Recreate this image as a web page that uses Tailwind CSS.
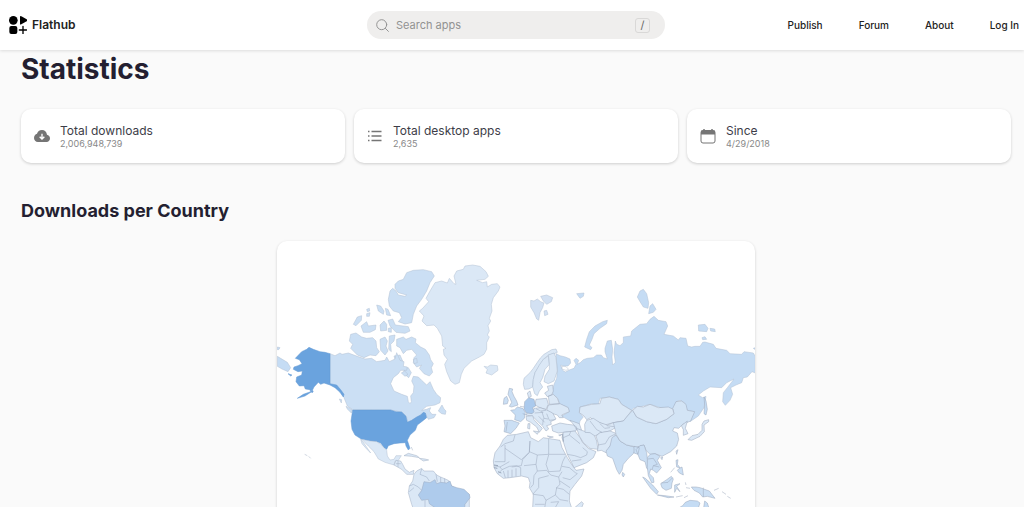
<!DOCTYPE html>
<html lang="en">
<head>
    <meta charset="UTF-8">
    <meta name="viewport" content="width=device-width, initial-scale=1.0">
    <title>Statistics | Flathub</title>
    <script src="https://cdn.jsdelivr.net/npm/@tailwindcss/browser@4"></script>
</head>
<body class="bg-[#fafafa] font-['Inter',sans-serif] text-[#241f31]">
    <div class="flex h-screen flex-col overflow-hidden">
        <!-- Header -->
        <header class="z-10 grid flex-shrink-0 grid-cols-[minmax(0,1fr)_298px_359px] items-center bg-white py-[11px] pl-[9px] shadow-[0_1px_3px_rgba(0,0,0,0.12)]">
            <a href="#" class="flex items-center gap-[5px] text-xs font-semibold text-[#222]">
                <svg class="h-[18px] w-[18px]" viewBox="0 0 54 54" fill="#000">
                    <circle cx="13" cy="13" r="13"/>
                    <rect x="1" y="30" width="24" height="24" rx="6"/>
                    <path d="M33 3q0-4 4-2l16 9q3 3 0 6l-16 9q-4 2-4-2z"/>
                    <path d="M42 31v22M31 42h22" stroke="#000" stroke-width="4" stroke-linecap="round"/>
                </svg>
                Flathub
            </a>
            <form class="flex h-7 items-center gap-[7px] rounded-full bg-[#efeeed] pr-[15px] pl-[9px]">
                <svg class="h-[13px] w-[13px] flex-shrink-0" viewBox="0 0 13 13" fill="none" stroke="#949494" stroke-linecap="round">
                    <circle cx="5.7" cy="5.7" r="5"/>
                    <path d="M9.4 9.4l3 3"/>
                </svg>
                <input type="text" aria-label="Search apps" placeholder="Search apps" class="min-w-0 flex-1 bg-transparent text-[11px] outline-none placeholder:text-[#929292]">
                <kbd class="flex h-[15px] w-[15px] items-center justify-center rounded-[3px] border border-[#d9d8d7] font-['Inter',sans-serif] text-[11px] text-[#666]">/</kbd>
            </form>
            <nav class="flex justify-end gap-9 pr-[5px] text-[10px] font-medium whitespace-nowrap text-[#222]">
                <a href="#">Publish</a>
                <a href="#">Forum</a>
                <a href="#">About</a>
                <a href="#">Log In</a>
            </nav>
        </header>

        <main class="flex flex-col pr-[13px] pl-[21px]">
            <h1 class="pt-[3px] text-[28px] leading-8 font-bold">Statistics</h1>

            <!-- Totals -->
            <div class="mt-6 grid grid-cols-3 gap-[9px] text-[#3d3d48]">
                <div class="flex items-center gap-[10px] rounded-[10px] bg-white px-[13px] py-[14px] shadow-[0_1px_3px_rgba(0,0,0,0.18)]">
                    <svg class="h-4 w-4" viewBox="0 0 48 40" fill="#757575">
                        <path d="M39 16C38 7 32 2 24 2S11 7 9 13C4 14 0 19 0 26c0 7 5 12 12 12h26c6 0 10-5 10-11s-4-10-9-11z"/>
                        <path d="M24 13v15M17 22l7 7 7-7" fill="none" stroke="#fff" stroke-width="4"/>
                    </svg>
                    <div>
                        <div class="text-xs leading-4">Total downloads</div>
                        <div class="text-[9px] leading-[10px] text-[#888]">2,006,948,739</div>
                    </div>
                </div>
                <div class="flex items-center gap-[10px] rounded-[10px] bg-white px-[13px] py-[14px] shadow-[0_1px_3px_rgba(0,0,0,0.18)]">
                    <svg class="h-4 w-4" viewBox="0 0 16 16" fill="none" stroke="#757575" stroke-width="1.400">
                        <path d="M4.500 3.500h10M4.500 8h10M4.500 12.500h10M1 3.500h1.500M1 8h1.500M1 12.500h1.500"/>
                    </svg>
                    <div>
                        <div class="text-xs leading-4">Total desktop apps</div>
                        <div class="text-[9px] leading-[10px] text-[#888]">2,635</div>
                    </div>
                </div>
                <div class="flex items-center gap-[10px] rounded-[10px] bg-white px-[13px] py-[14px] shadow-[0_1px_3px_rgba(0,0,0,0.18)]">
                    <svg class="h-4 w-4" viewBox="0 0 16 16" fill="none" stroke="#757575">
                        <rect x="1" y="2.500" width="14" height="12.500" rx="2"/>
                        <path d="M1 4.500h14" stroke-width="4"/>
                        <path d="M4 1v3M12 1v3" stroke-width="1.500"/>
                    </svg>
                    <div>
                        <div class="text-xs leading-4">Since</div>
                        <div class="text-[9px] leading-[10px] text-[#888]">4/29/2018</div>
                    </div>
                </div>
            </div>

            <h2 class="mt-9 text-lg leading-6 font-bold">Downloads per Country</h2>

            <!-- World map -->
            <div class="mt-[18px] w-[478px] max-w-full self-center overflow-hidden rounded-[10px] bg-white shadow-[0_1px_3px_rgba(0,0,0,0.18)]">
                <svg class="block w-full" viewBox="0 0 1434 840" role="img" aria-label="Downloads per country" fill="#dbe8f6" stroke="#b3c0d2" stroke-width="1.500" stroke-linejoin="round">
                    <!-- Canadian Arctic -->
                    <g transform="translate(-21 -30)" fill="#cbdff4">
                        <path d="M375 160L385 150 400 145 410 125 430 118 460 116 485 122 493 135 480 155 470 180 455 205 440 225 430 250 425 275 405 279 385 272 395 260 388 245 370 240 358 225 355 205 360 180 368 172 378 180 385 192 405 196 410 192 385 185 375 172Z"/>
                        <path d="M320 222L332 225 342 240 340 250 325 240ZM346 232L354 235 362 254 350 252ZM290 235L298 232 299 240 292 242ZM290 248L300 245 298 256 290 256ZM250 280L262 258 275 254 274 268 258 284ZM273 285L290 272 295 285 318 282 316 296 300 304 280 304ZM330 282L342 270 350 280 350 298 332 300ZM354 268L368 264 376 282 415 287 420 300 405 307 378 304 360 285ZM355 292L364 290 364 304 355 302Z"/>
                        <path d="M242 310L258 306 275 318 290 322 308 320 318 330 320 350 328 362 318 374 300 372 282 380 262 372 242 352 248 340 238 330ZM330 325L345 318 352 330 348 345 354 360 345 372 332 358ZM358 315L375 312 372 330 362 340 364 362 356 355Z"/>
                        <path d="M380 325L400 318 408 325 425 318 438 324 436 335 452 348 466 355 478 372 482 386 490 398 484 410 488 424 478 435 462 428 448 412 455 402 440 408 430 395 432 380 440 372 425 355 410 358 400 368 390 350 380 345ZM372 375L390 372 398 390 388 398 376 388ZM430 385L440 382 442 395 432 398ZM402 412L415 410 424 425 416 440 402 428Z"/>
                    </g>
                    <!-- Greenland, Iceland, Svalbard -->
                    <g transform="translate(369 -30)">
                        <path d="M58 240L68 232 86 212 78 202 90 180 105 155 125 150 142 156 148 142 162 158 168 160 162 135 170 120 190 115 195 105 218 102 240 106 258 122 265 136 255 145 230 148 248 155 260 152 262 168 275 160 292 158 300 168 295 180 280 200 274 220 276 240 268 262 272 270 264 284 268 300 262 312 268 318 260 335 260 355 252 370 238 378 215 390 192 412 184 430 178 455 165 460 152 450 140 422 134 400 142 385 132 372 130 355 138 352 128 345 125 315 112 292 102 282 80 284 66 270 72 255Z"/>
                        <path d="M252 406L262 408 272 402 292 404 294 418 275 432 258 426 262 416Z"/>
                        <path fill="#d3e1f3" d="M392 208L402 210 412 204 422 212 432 216 428 230 420 245 416 268 410 264 402 245 392 228ZM422 196L440 192 458 200 454 212 440 220 430 210ZM432 240L440 238 444 250 434 254Z"/>
                    </g>
                    <!-- Russia -->
                    <g transform="translate(789 90)" fill="#c5dcf4">
                        <path d="M48 248L60 254 76 258 90 264 92 276 84 285 70 285 62 282 68 298 76 303 90 296 102 292 108 280 102 268 108 262 116 268 112 280 122 274 130 266 142 262 160 260 170 252 184 252 190 260 202 264 195 242 195 232 202 210 214 208 218 235 216 258 218 282 226 274 222 245 226 210 230 220 240 224 250 215 250 198 272 195 275 180 300 160 320 158 330 145 342 136 355 148 378 152 383 165 372 190 400 195 415 207 420 200 438 202 443 225 455 228 465 226 480 226 488 214 495 213 520 220 528 232 560 238 570 248 605 250 612 242 640 246 646 256V306L636 302 622 318 610 320 605 335 588 342 572 350 578 370 570 388 556 403 548 392 550 365 562 350 582 324 560 335 545 350 510 348 490 360 475 372 488 380 498 376 492 410 475 435 450 452 462 422 442 418 432 394 420 388 408 392 402 412 385 415 355 408 330 400 310 405 280 412 275 418 245 400 235 385 208 378 180 382 175 400 155 398 120 408 118 425 130 438 120 450 118 460 90 450 65 435 88 422 82 408 60 400 52 380 38 370 38 358 42 340 50 322 52 300Z"/>
                        <path d="M202 148L188 152 165 165 148 182 140 205 134 228 152 236 156 230 148 222 156 205 162 188 180 172 200 158ZM292 78L300 60 310 55 320 68 326 95 324 112 310 108 300 92ZM330 105L338 98 348 115 340 124 326 128ZM475 162L495 160 504 172 500 182 476 180ZM510 172L524 174 526 182 512 180ZM486 200L495 197 500 205 488 206ZM110 68L132 66 130 76 120 82ZM640 232L646 230V236Z"/>
                        <path fill="#fff" d="M66 286l12 1 8 8-8 3-12-4z"/>
                    </g>
                    <!-- North America -->
                    <g transform="translate(-21 270)">
                        <path fill="#cbdff4" d="M180 68L195 74 210 66 216 70 235 66 262 76 285 84 305 82 320 92 345 88 350 78 358 92 375 84 380 65 390 88 402 92 400 106 412 108 410 118 392 118 385 128 370 140 362 158 372 180 395 190 412 196 415 212 420 218 424 212 422 195 430 185 432 165 425 150 430 136 445 138 455 148 470 162 480 152 490 175 500 190 512 200 510 215 495 222 470 226 455 238 470 235 482 230 478 240 486 250 498 250 492 260 475 265 466 248 455 250 440 262 412 274 410 258 395 243 362 237 248 236 232 225 222 200 210 180 195 164 180 160ZM505 240L512 228 516 222 522 234 528 240 526 250 515 248ZM394 126L404 120 414 130 405 136ZM228 226L246 236 244 246 232 234ZM208 204L215 206 214 216Z"/>
                        <path fill="#c5dcf4" d="M22 76L42 88 52 94 62 110 54 122 36 114 22 106ZM22 48L30 50 26 56H22Z"/>
                        <path fill="#6aa3de" stroke="#6398d2" d="M180 68L165 64 150 62 130 55 117 49 110 55 95 62 76 82 88 86 96 98 84 104 72 108 70 115 84 122 97 120 95 132 80 138 78 152 88 165 102 164 106 174 120 176 122 182 100 190 82 202 105 195 125 182 132 168 145 154 152 160 162 156 180 162 195 170 210 184 220 198 222 190 212 176 200 162 180 158ZM54 128L66 132 62 135ZM124 178L130 180 126 186Z"/>
                        <path fill="#6aa3de" stroke="#6398d2" d="M248 237H362L378 242 395 243 408 256 412 274 425 268 440 258 452 252 460 244 466 246 470 260 455 272 442 282 436 298 420 312 412 328 420 352 415 357 408 345 406 335 390 336 372 338 355 344 350 355 342 350 332 336 320 332 300 330 275 325 255 312 246 295 243 270Z"/>
                        <path d="M275 325L300 330 320 332 332 340 342 350 350 358 352 375 360 387 372 385 378 374 394 374 385 388 375 390 372 402 345 394 325 384 312 362 295 345ZM272 325L280 334 302 366 290 354 276 338Z"/>
                        <path stroke="#a0aec2" d="M372 402L378 388 392 390 398 400 405 414 418 424 432 418 430 430 410 430 395 415ZM378 398L392 398M384 390V408M402 374L415 367 440 374 448 380 425 376ZM448 382L465 384 476 387 460 390ZM424 348L428 358M104 370L112 374M116 376L122 382"/>
                        <path stroke="#a0aec2" d="M432 430L440 420 455 412 462 420 490 420 500 432 512 438 535 448 545 465 598 490V560H440L425 520 415 485 418 465 428 450Z"/>
                        <path fill="#aecbec" stroke="#98a9c0" d="M462 452L480 455 495 446 500 458 512 454 530 456 540 450 545 465 560 470 582 475 598 490 600 500 585 520 580 570H500L495 530 478 518 475 505 455 508 445 492 455 478Z"/>
                        <path fill="none" stroke="#98a9c0" d="M455 414L450 430 470 438 478 450M498 430L502 452M512 438V454M524 442V455M418 465L430 460 445 468 455 478M418 482L432 470M465 508V560"/>
                    </g>
                    <!-- Europe, Africa and the Middle East -->
                    <g transform="translate(609 300)" stroke="#9aa7ba">
                        <g stroke="#a9b8cc">
                            <path d="M215 26L228 24 232 34 222 38 205 42 190 55 178 75 165 95 160 115 158 138 146 144 134 145 130 130 132 112 150 95 160 82 172 64 182 50 192 40Z"/>
                            <path d="M190 55L205 45 208 70 195 85 188 110 180 125 188 138 178 150 172 164 164 158 158 138 160 115 165 95 178 72Z"/>
                            <path d="M205 42L222 36 228 50 232 90 222 120 205 128 192 122 195 105 208 85 208 65Z"/>
                        </g>
                        <path d="M202 136L218 132 220 150 215 162 202 167 194 156 206 148ZM168 175L200 172 205 190 198 205 180 200 165 192ZM205 165L220 160 232 172 238 188 208 190ZM205 192L240 188 265 200 268 212 245 222 250 230 238 230 232 222 218 218 200 208ZM142 156L150 150 154 166 146 170Z"/>
                        <path fill="#cbdff4" d="M88 142L98 144 96 152 102 166 110 180 114 192 95 198 88 196 95 184 90 172 84 160ZM72 172L80 166 85 178 82 188 70 190Z"/>
                        <path fill="#c5dcf4" d="M92 208L104 206 112 198 128 202 136 214 133 232 122 242 104 236 106 222Z"/>
                        <path fill="#cbdff4" d="M72 238L95 238 118 246 108 262 92 278 72 272 75 255Z"/>
                        <path fill="none" d="M82 243L78 272M120 196L134 198"/>
                        <path d="M162 202L180 200 198 206 218 216 228 234 212 242 214 250 200 254 206 264 198 270 188 256 172 240 158 226 138 222 142 214 158 216Z"/>
                        <path d="M138 226L158 224 162 236 175 250 187 262 178 274 170 258 152 244 140 238ZM144 248L150 248 149 264 143 262ZM160 270L176 272 172 280ZM202 285L220 288 210 290ZM236 282L246 280 240 285Z"/>
                        <path d="M215 255L240 246 262 250 280 252 290 258 288 270 265 272 235 276 218 270ZM270 238L298 248 305 268 290 266 282 252Z"/>
                        <path fill="#abcaed" d="M134 182L146 170 162 175 167 195 158 200 162 212 156 218 140 216 132 205Z"/>
                        <path d="M82 283L110 280 145 272 152 290 175 302 190 290 240 298 246 320 262 350 276 372 288 388 312 384 305 405 285 430 270 450 268 480 275 501V540H165L158 500 160 460 148 440 150 425 145 410 125 405 90 410 70 412 52 398 42 380 40 360 45 335 60 315 70 295Z"/>
                        <path d="M246 290L250 274 285 270 300 290 308 305 325 322 348 332 340 350 320 365 282 380 275 365 262 340Z"/>
                        <path d="M290 262L305 268 318 272 340 275 350 300 354 325 330 322 310 305 298 285Z"/>
                        <path fill="none" d="M168 203L182 210 198 208M164 216L190 214M185 210L192 232 204 234M176 226L194 244M200 218L208 238 226 236M190 232L188 252M128 218L140 222"/>
                        <path fill="none" d="M105 282L100 300 75 308 62 318M75 312V322L124 356 148 334 150 300M75 322V362H44M150 300L148 332 172 342 206 340V294M206 340H256M148 334L128 356 124 374 95 378M172 342L168 370 132 374M206 342L198 370 206 392 240 390 248 362 256 346M168 370L172 390 162 404M172 390L200 388M200 388L212 402 236 408 246 392M246 376L268 380 286 395 292 398 270 416 248 410M236 408L240 430 230 440 226 462M162 404L160 430 152 440M176 412L176 440 158 460M176 412L206 404M240 420L270 440M228 440L250 445 268 460M160 460L190 464 198 478 226 462 240 476 264 480M198 478L194 501M212 484L236 482M225 501L236 482M165 490H194M42 374L60 378 66 386 54 398M60 378L88 362M66 386L88 376 110 374 122 380 122 404M84 388V410M96 386V408M108 382V406M70 390L76 410"/>
                        <path fill="none" stroke-width="3" d="M42 372L54 374M42 380L52 382M54 392L64 396M248 278L250 302"/>
                        <path fill="none" d="M250 290L268 282 272 272M268 282L300 308M262 340L284 344 302 350 320 342 322 332 308 320M276 360L304 356"/>
                        <path d="M305 482L310 488 300 512 288 520 284 500Z"/>
                    </g>
                    <!-- Asia and Oceania -->
                    <g transform="translate(969 390)" stroke="#9aa7ba">
                        <path d="M-62 125L-60 108 -25 100 0 98 4 82 28 78 55 85 65 100 95 118 85 132 70 150 40 155 15 162 0 155 -20 148 -28 140 -40 146 -48 135Z"/>
                        <path d="M-46 160L-40 148 -20 142 0 155 22 162 40 155 68 152 50 168 30 180 0 186 -15 195 -30 185 -45 184Z"/>
                        <path d="M-12 195L0 185 30 180 46 186 45 205 30 225 18 245 4 238 -8 240 -4 222Z"/>
                        <path fill="none" d="M-30 150L-10 176 6 184M0 158L14 172 30 170M20 164L50 168M-6 222L16 218 28 198 44 190"/>
                        <path fill="#cbdff4" d="M18 240L30 225 36 200 48 192 60 210 80 222 110 230 128 222 115 245 104 240 100 248 85 262 70 280 66 298 58 310 50 296 38 262 22 255ZM68 304L74 310 70 318 66 312Z"/>
                        <path fill="#d3e4f5" d="M40 155L70 150 85 132 98 118 110 138 140 152 168 158 200 145 222 128 218 112 228 92 245 90 258 100 262 118 284 122 272 150 248 160 236 172 222 170 218 180 232 186 236 205 230 225 212 242 186 256 165 248 150 250 138 238 132 222 110 228 80 222 60 210 48 190 45 175Z"/>
                        <path d="M98 118L112 106 130 108 150 100 175 110 205 108 218 114 222 128 200 145 168 158 140 152 110 138Z"/>
                        <path fill="#cbdff4" d="M108 236L120 224 132 222 140 245 142 262 150 300 140 292 135 272 120 266ZM102 226L118 230 114 250 102 246Z"/>
                        <path fill="#cbdff4" d="M142 260L150 250 165 248 180 256 172 268 184 290 170 306 160 298 152 294 148 308 160 320 162 334 155 335 145 314 142 290Z"/>
                        <path fill="none" d="M144 264L160 262 172 280 160 284 156 296M160 284L178 288"/>
                        <path d="M264 206L276 194 294 190 306 178 306 160 312 150 326 146 326 152 312 162 313 182 300 196 275 208ZM244 164L262 150 256 172 264 188 250 193 250 176ZM228 240L234 236 230 250ZM182 260L188 258 186 266Z"/>
                        <path fill="#c5dcf4" d="M312 78L318 90 322 115 318 132 312 128 314 102Z"/>
                        <path fill="#cbdff4" d="M128 318L136 322 158 342 175 362 170 370 152 352ZM172 372L195 374 222 378 205 380ZM182 338L200 326 214 316 220 324 216 336 214 352 198 358 186 350ZM224 342L240 338 230 346 240 362 230 352 224 364ZM228 268L234 266 232 280 240 290 230 288ZM238 292L246 288 250 312 238 306 232 298ZM212 304L224 290M228 378L248 374M256 334L258 342M258 350L270 352M252 380L264 374M274 348L288 348 300 350 328 360 345 382 322 376 308 378 298 366 282 358ZM342 358L356 352M366 362L378 370M382 376L392 382"/>
                        <path fill="none" d="M310 350V378M184 336L204 334 218 320"/>
                        <path fill="#c5dcf4" d="M234 412L248 404 256 394 270 388 292 390 300 396 296 408 310 416 314 390 322 396 330 420V440H234Z"/>
                    </g>
                </svg>
            </div>
        </main>
    </div>
</body>
</html>
